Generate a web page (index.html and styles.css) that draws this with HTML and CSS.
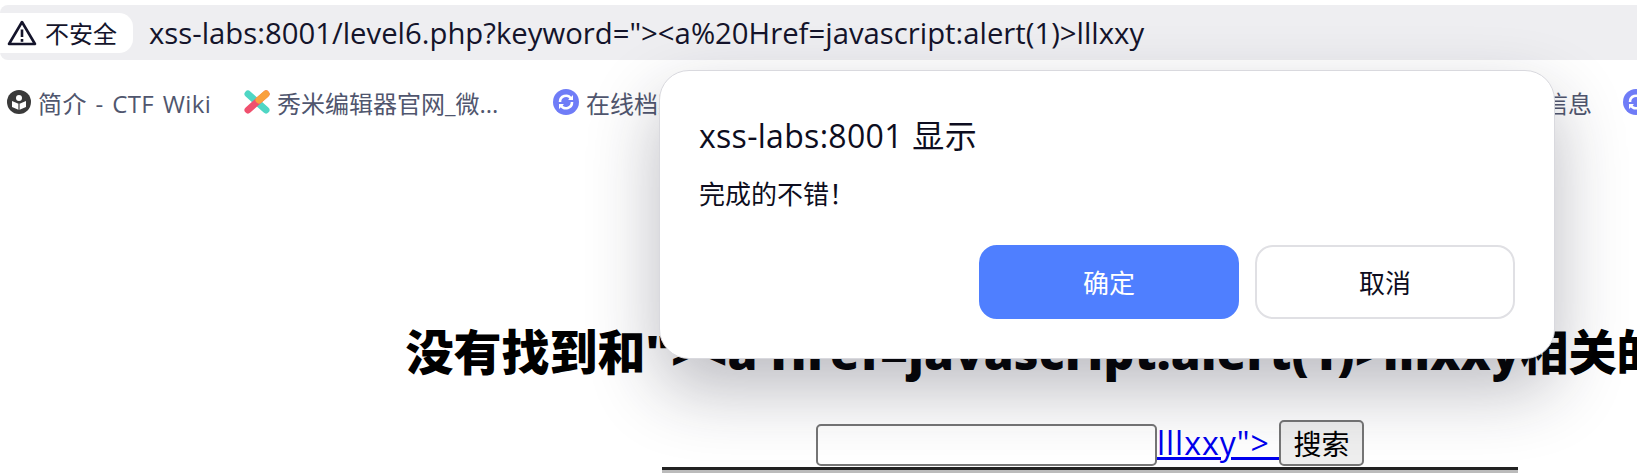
FILE: index.html
```html
<!DOCTYPE html>
<html lang="zh">
<head>
<meta charset="utf-8">
<title>xss-labs level6</title>
<link rel="stylesheet" href="styles.css">
</head>
<body>
<div class="chrome">
  <div class="address">
    <div class="chip">
      <svg class="warn" viewBox="0 0 30 28" width="30" height="28"><path d="M15 3 L28 25 H2 Z" fill="none" stroke="#14142b" stroke-width="2.6" stroke-linejoin="round"/><path d="M15 10.5 V18" stroke="#14142b" stroke-width="2.6"/><path d="M15 20 V22.8" stroke="#14142b" stroke-width="2.6"/></svg>
      <span>不安全</span>
    </div>
    <div class="url">xss-labs:8001/level6.php?keyword="&gt;&lt;a%20Href=javascript:alert(1)&gt;lllxxy</div>
  </div>
  <div class="bookmarks">
    <div class="bm bm1">
      <svg viewBox="0 0 24 24" width="24" height="24"><circle cx="12" cy="12" r="12" fill="#3a3a3a"/><circle cx="12" cy="8" r="3" fill="#fff"/><path d="M5 11 L12 14 L19 11 V17 L12 20 L5 17 Z" fill="#fff"/><path d="M12 14 V20" stroke="#3a3a3a" stroke-width="1.2"/></svg>
      <span>简介 - CTF Wiki</span>
    </div>
    <div class="bm bm2">
      <svg viewBox="0 0 26 24" width="26" height="24"><path d="M4 4 L22 20" stroke="#4fd6c4" stroke-width="7" stroke-linecap="round"/><path d="M22 4 L4 20" stroke="#f0506e" stroke-width="7" stroke-linecap="round"/><path d="M22 4 L15 10" stroke="#f9a03f" stroke-width="7" stroke-linecap="round"/></svg>
      <span>秀米编辑器官网_微...</span>
    </div>
    <div class="bm bm3">
      <svg viewBox="0 0 26 26" width="26" height="26"><circle cx="13" cy="13" r="13" fill="#6f7cf7"/><path d="M7 13 A6 6 0 0 1 18 9.5 M19 13 A6 6 0 0 1 8 16.5" fill="none" stroke="#fff" stroke-width="2.6"/><path d="M20 6 V11 H15 Z M6 20 V15 H11 Z" fill="#fff"/></svg>
      <span>在线档案馆</span>
    </div>
    <div class="bm bm4"><span>信息</span></div>
    <div class="bm bm5">
      <svg viewBox="0 0 26 26" width="26" height="26"><circle cx="13" cy="13" r="13" fill="#6f7cf7"/><path d="M7 13 A6 6 0 0 1 18 9.5 M19 13 A6 6 0 0 1 8 16.5" fill="none" stroke="#fff" stroke-width="2.6"/><path d="M20 6 V11 H15 Z M6 20 V15 H11 Z" fill="#fff"/></svg>
    </div>
  </div>
</div>
<main class="page">
  <h2 class="headline">没有找到和<span class="latin">"&gt;&lt;a Href=javascript:alert(1)&gt;lllxxy</span>相关的结果.</h2>
  <form class="search">
    <input class="field" type="text" name="keyword"><a class="link" href="#">lllxxy"&gt; </a><input class="submit" type="button" value="搜索">
  </form>
  <div class="bar"></div>
</main>
<div class="dialog">
  <div class="title">xss-labs:8001 显示</div>
  <div class="message">完成的不错！</div>
  <div class="actions">
    <button class="btn primary" type="button">确定</button>
    <button class="btn" type="button">取消</button>
  </div>
</div>
</body>
</html>
```

FILE: styles.css
```css
html, body {
  margin: 0;
  height: 473px;
  overflow: hidden;
  background: #fff;
}
body {
  width: 2180px;
  position: relative;
  font-family: "Open Sans", "Noto Sans CJK SC", sans-serif;
}
.chrome {
  padding-top: 5px;
  width: 1637px;
}
.address {
  height: 55px;
  background: #eeeef1;
  border-radius: 8px 0 0 8px;
  display: flex;
  align-items: center;
  gap: 16px;
}
.chip {
  width: 133px;
  height: 40px;
  box-sizing: border-box;
  padding-left: 7px;
  background: #fff;
  border-radius: 0 14px 14px 0;
  display: flex;
  align-items: center;
  gap: 8px;
  font-size: 24px;
  color: #14142b;
}
.warn {
  flex: none;
}
.url {
  font-size: 29.3px;
  color: #14142b;
  white-space: nowrap;
}
.bookmarks {
  height: 84px;
  display: flex;
  align-items: center;
  font-size: 24px;
  color: #50566e;
  white-space: nowrap;
  position: relative;
}
.bm {
  display: flex;
  align-items: center;
  gap: 7px;
  flex: none;
}
.bm1 {
  margin-left: 7px;
  width: 237px;
  word-spacing: 2px;
  letter-spacing: 0.4px;
}
.bm2 {
  width: 309px;
}
.bm3 {
  width: 991px;
}
.bm4 {
  width: 79px;
}
.headline {
  margin: 0;
  padding-top: 183px;
  text-align: center;
  font-size: 48px;
  font-weight: 800;
  color: #000;
  line-height: 60px;
  white-space: nowrap;
}
.latin {
  letter-spacing: 0.2px;
}
.page {
  position: absolute;
  top: 139px;
  left: 0;
  width: 2180px;
}
.search {
  margin-top: 38px;
  text-align: center;
  font-size: 32px;
  line-height: 46px;
  height: 47px;
}
.field {
  width: 341px;
  height: 42px;
  box-sizing: border-box;
  border: 2px solid #767676;
  border-radius: 5px;
  padding: 0;
  vertical-align: bottom;
  background: #fff;
}
.link {
  color: #0000ee;
  letter-spacing: 1px;
}
.submit {
  width: 85px;
  height: 46px;
  box-sizing: border-box;
  border: 2px solid #767676;
  border-radius: 5px;
  background: #efefef;
  font-size: 28px;
  font-family: "Noto Sans CJK SC", sans-serif;
  padding: 0;
  color: #000;
  vertical-align: bottom;
}
.bar {
  width: 856px;
  height: 3px;
  margin: 0 auto;
  background: #222;
  border-bottom: 3px solid #bbb;
}
.dialog {
  position: absolute;
  left: 659px;
  top: 70px;
  width: 896px;
  height: 289px;
  box-sizing: border-box;
  padding: 45px 39px 39px;
  background: #fff;
  border: 1px solid #d9d9de;
  border-radius: 30px;
  box-shadow: 0 30px 70px rgba(30, 30, 50, 0.3);
  color: #0d0d20;
  display: flex;
  flex-direction: column;
}
.title {
  font-size: 32px;
  line-height: 40px;
  word-spacing: 1px;
  letter-spacing: 0.3px;
}
.message {
  font-size: 26px;
  line-height: 34px;
  margin-top: 21px;
}
.actions {
  margin-top: auto;
  display: flex;
  justify-content: flex-end;
  gap: 16px;
}
.btn {
  width: 260px;
  height: 74px;
  border: 2px solid #e0e0e4;
  border-radius: 18px;
  background: #fff;
  font-size: 26px;
  font-family: "Open Sans", "Noto Sans CJK SC", sans-serif;
  color: #0d0d20;
  padding: 0;
}
.primary {
  background: #4f7fff;
  border-color: #4f7fff;
  color: #fff;
}
```
